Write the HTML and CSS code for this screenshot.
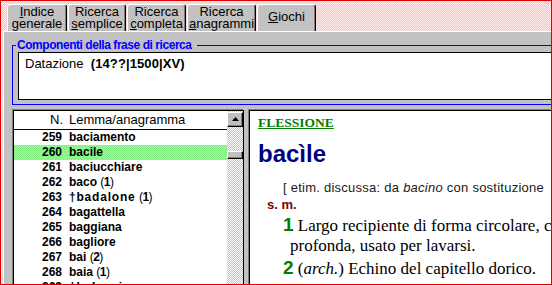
FILE: index.html
```html
<!DOCTYPE html>
<html lang="it">
<head>
<meta charset="utf-8">
<title>Ricerca completa</title>
<link rel="stylesheet" href="styles.css">
</head>
<body>
<div class="frame">
  <div class="tabs">
    <div class="tab t1"><span class="u">I</span>ndice<br>generale</div>
    <div class="tab t2">Ricerca<br><span class="u">s</span>emplice</div>
    <div class="tab t3">Ricerca<br><span class="u">c</span>ompleta</div>
    <div class="tab t4">Ricerca<br><span class="u">a</span>nagrammi</div>
    <div class="tab t5 single"><span class="u">G</span>iochi</div>
  </div>
  <div class="panel">
    <fieldset class="group">
      <legend class="legend">Componenti della frase di ricerca</legend>
      <div class="field">Datazione&nbsp; <b class="q">(14??|1500|XV)</b></div>
    </fieldset>
    <div class="lower">
      <div class="list">
        <div class="list-main">
          <div class="list-head"><span class="num">N.</span><span class="lem">Lemma/anagramma</span></div>
          <div class="row"><span class="num">259</span><span class="lem">baciamento</span></div>
          <div class="row sel"><span class="num">260</span><span class="lem">bacile</span></div>
          <div class="row"><span class="num">261</span><span class="lem">baciucchiare</span></div>
          <div class="row"><span class="num">262</span><span class="lem">baco <span class="hom">(<b>1</b>)</span></span></div>
          <div class="row"><span class="num">263</span><span class="lem"><span class="spaced">†badalone</span> <span class="hom">(<b>1</b>)</span></span></div>
          <div class="row"><span class="num">264</span><span class="lem">bagattella</span></div>
          <div class="row"><span class="num">265</span><span class="lem">baggiana</span></div>
          <div class="row"><span class="num">266</span><span class="lem">bagliore</span></div>
          <div class="row"><span class="num">267</span><span class="lem">bai <span class="hom">(<b>2</b>)</span></span></div>
          <div class="row"><span class="num">268</span><span class="lem">baia <span class="hom">(<b>1</b>)</span></span></div>
          <div class="row"><span class="num">269</span><span class="lem"><span class="spaced">†balascio</span></span></div>
        </div>
        <div class="scroll">
          <div class="sbtn"><svg width="7" height="4" viewBox="0 0 7 4"><polygon points="0,4 3.5,0 7,4" fill="#000"/></svg></div>
          <div class="thumb"></div>
        </div>
      </div>
      <div class="pane">
        <div class="ftitle">FLESSIONE</div>
        <div class="head">bacìle</div>
        <div class="etym">[ etim. discussa: da <i>bacino</i> con sostituzione</div>
        <div class="pos">s. m.</div>
        <div class="sense"><span class="sn">1</span> Largo recipiente di forma circolare, con bordo basso e poco<br>profonda, usato per lavarsi.</div>
        <div class="sense"><span class="sn">2</span> (<i>arch.</i>) Echino del capitello dorico.</div>
      </div>
    </div>
  </div>
</div>
</body>
</html>
```
FILE: styles.css
```css
html, body {
  margin: 0;
  padding: 0;
  background: #ffffff;
}

.frame {
  box-sizing: border-box;
  width: 552px;
  height: 285px;
  border: 1px solid #dd0000;
  padding: 3px 0 0 2px;
  display: flex;
  flex-direction: column;
  overflow: hidden;
  background-color: #ffd4d4;
  background-image: repeating-conic-gradient(#ffc6c6 0 25%, #ffe6e6 0 50%);
  background-size: 2px 2px;
  font-family: "Liberation Sans", Arial, sans-serif;
  color: #000;
}

.tab,
.panel {
  background-color: #c0c0c0;
  background-image: repeating-conic-gradient(#bbbbbb 0 25%, #c9c9c9 0 50%);
  background-size: 2px 2px;
}

/* ---------- tabs ---------- */
.tabs {
  display: flex;
  gap: 1px;
  padding-left: 4px;
  height: 27px;
  flex: none;
}

.tab {
  box-sizing: border-box;
  height: 27px;
  border-top: 1px solid #ffffff;
  border-left: 1px solid #ffffff;
  border-right: 1px solid #000000;
  box-shadow: inset -1px 0 0 #808080;
  border-radius: 3px 3px 0 0;
  padding-top: 1px;
  font-size: 13px;
  line-height: 12px;
  text-align: center;
  white-space: nowrap;
  overflow: hidden;
}

.t1 { width: 60px; }
.t2 { width: 58px; }
.t3 { width: 59px; }
.t4 { width: 69px; }
.t5 { width: 59px; }

.tab.single { padding-top: 6px; }

.u {
  text-decoration: underline;
  text-underline-offset: 1px;
}

/* ---------- panel ---------- */
.panel {
  flex: 1;
  border-top: 1px solid #ffffff;
  border-left: 1px solid #ffffff;
  padding-left: 8px;
  overflow: hidden;
  min-height: 0;
}

.group {
  margin: 6px -40px 0 0;
  padding: 0 0 4px 5px;
  border: 1px solid #0000ff;
  min-width: 0;
}

.legend {
  margin-left: -2px;
  padding: 0 5px 0 1px;
  font-size: 12px;
  line-height: 14px;
  font-weight: bold;
  letter-spacing: -0.45px;
  color: #0000ff;
}

.field {
  box-sizing: border-box;
  height: 48px;
  background: #ffffff;
  border: 1px solid #000000;
  padding: 3px 6px;
  font-size: 13px;
  line-height: 16px;
}

.q { letter-spacing: 0.1px; }

.lower {
  display: flex;
  margin-top: 5px;
  height: 200px;
}

/* ---------- list ---------- */
.list {
  box-sizing: border-box;
  width: 231px;
  margin-left: 1px;
  border: 1px solid #000000;
  box-shadow: -1px -1px 0 #808080;
  background: #ffffff;
  display: flex;
  flex: none;
}

.list-main {
  width: 213px;
  flex: none;
}

.list-head {
  height: 18px;
  line-height: 18px;
  border-bottom: 1px solid #000000;
  font-size: 13px;
  display: flex;
}

.num {
  width: 48px;
  text-align: right;
  flex: none;
}

.lem {
  margin-left: 7px;
  white-space: nowrap;
}

.list-head .num { width: 49px; }
.list-head .lem { margin-left: 6px; }

.row {
  height: 15px;
  line-height: 15px;
  font-size: 12px;
  font-weight: bold;
  display: flex;
}

.row.sel {
  background-color: #8cf28c;
  background-image: repeating-conic-gradient(#80ee80 0 25%, #9cf89c 0 50%);
  background-size: 2px 2px;
}

.hom {
  font-weight: normal;
  letter-spacing: -0.5px;
}

.hom b { font-weight: bold; }

.spaced { letter-spacing: 0.8px; }

.scroll {
  width: 16px;
  flex: none;
  background-color: #e0e0e0;
  background-image: repeating-conic-gradient(#c0c0c0 0 25%, #ffffff 0 50%);
  background-size: 2px 2px;
}

.sbtn,
.thumb {
  box-sizing: border-box;
  background: #c0c0c0;
  border: 1px solid;
  border-color: #ffffff #000000 #000000 #ffffff;
  box-shadow: inset -1px -1px 0 #808080;
}

.sbtn {
  height: 15px;
  margin-top: 1px;
  display: flex;
  align-items: center;
  justify-content: center;
}

.sbtn svg {
  display: block;
  margin-top: -2px;
}

.thumb {
  height: 8px;
  margin-top: 24px;
}

/* ---------- article pane ---------- */
.pane {
  flex: 1;
  margin-left: 5px;
  background: #ffffff;
  border-top: 1px solid #000000;
  border-left: 1px solid #000000;
  box-shadow: -1px -1px 0 #808080;
  padding: 4px 0 0 8px;
  overflow: hidden;
  white-space: nowrap;
  min-width: 0;
}

.ftitle {
  font-family: "Liberation Serif", "Times New Roman", serif;
  font-weight: bold;
  font-size: 13.5px;
  line-height: 16px;
  color: #008000;
  text-decoration: underline;
}

.head {
  margin-top: 9px;
  font-size: 24px;
  line-height: 28px;
  font-weight: bold;
  color: #000080;
}

.etym {
  margin-top: 12px;
  padding-left: 25px;
  font-size: 13px;
  line-height: 16px;
  letter-spacing: 0.25px;
  color: #1a1a1a;
}

.pos {
  margin-top: 1px;
  padding-left: 9px;
  font-size: 13px;
  line-height: 16px;
  font-weight: bold;
  color: #800000;
}

.sense {
  margin-top: 3px;
  padding-left: 32px;
  text-indent: -7px;
  font-family: "Liberation Serif", "Times New Roman", serif;
  font-size: 17px;
  line-height: 20px;
  color: #000000;
}

.sn {
  font-family: "Liberation Sans", Arial, sans-serif;
  font-weight: bold;
  font-size: 19px;
  line-height: 14px;
  color: #008000;
}
```
